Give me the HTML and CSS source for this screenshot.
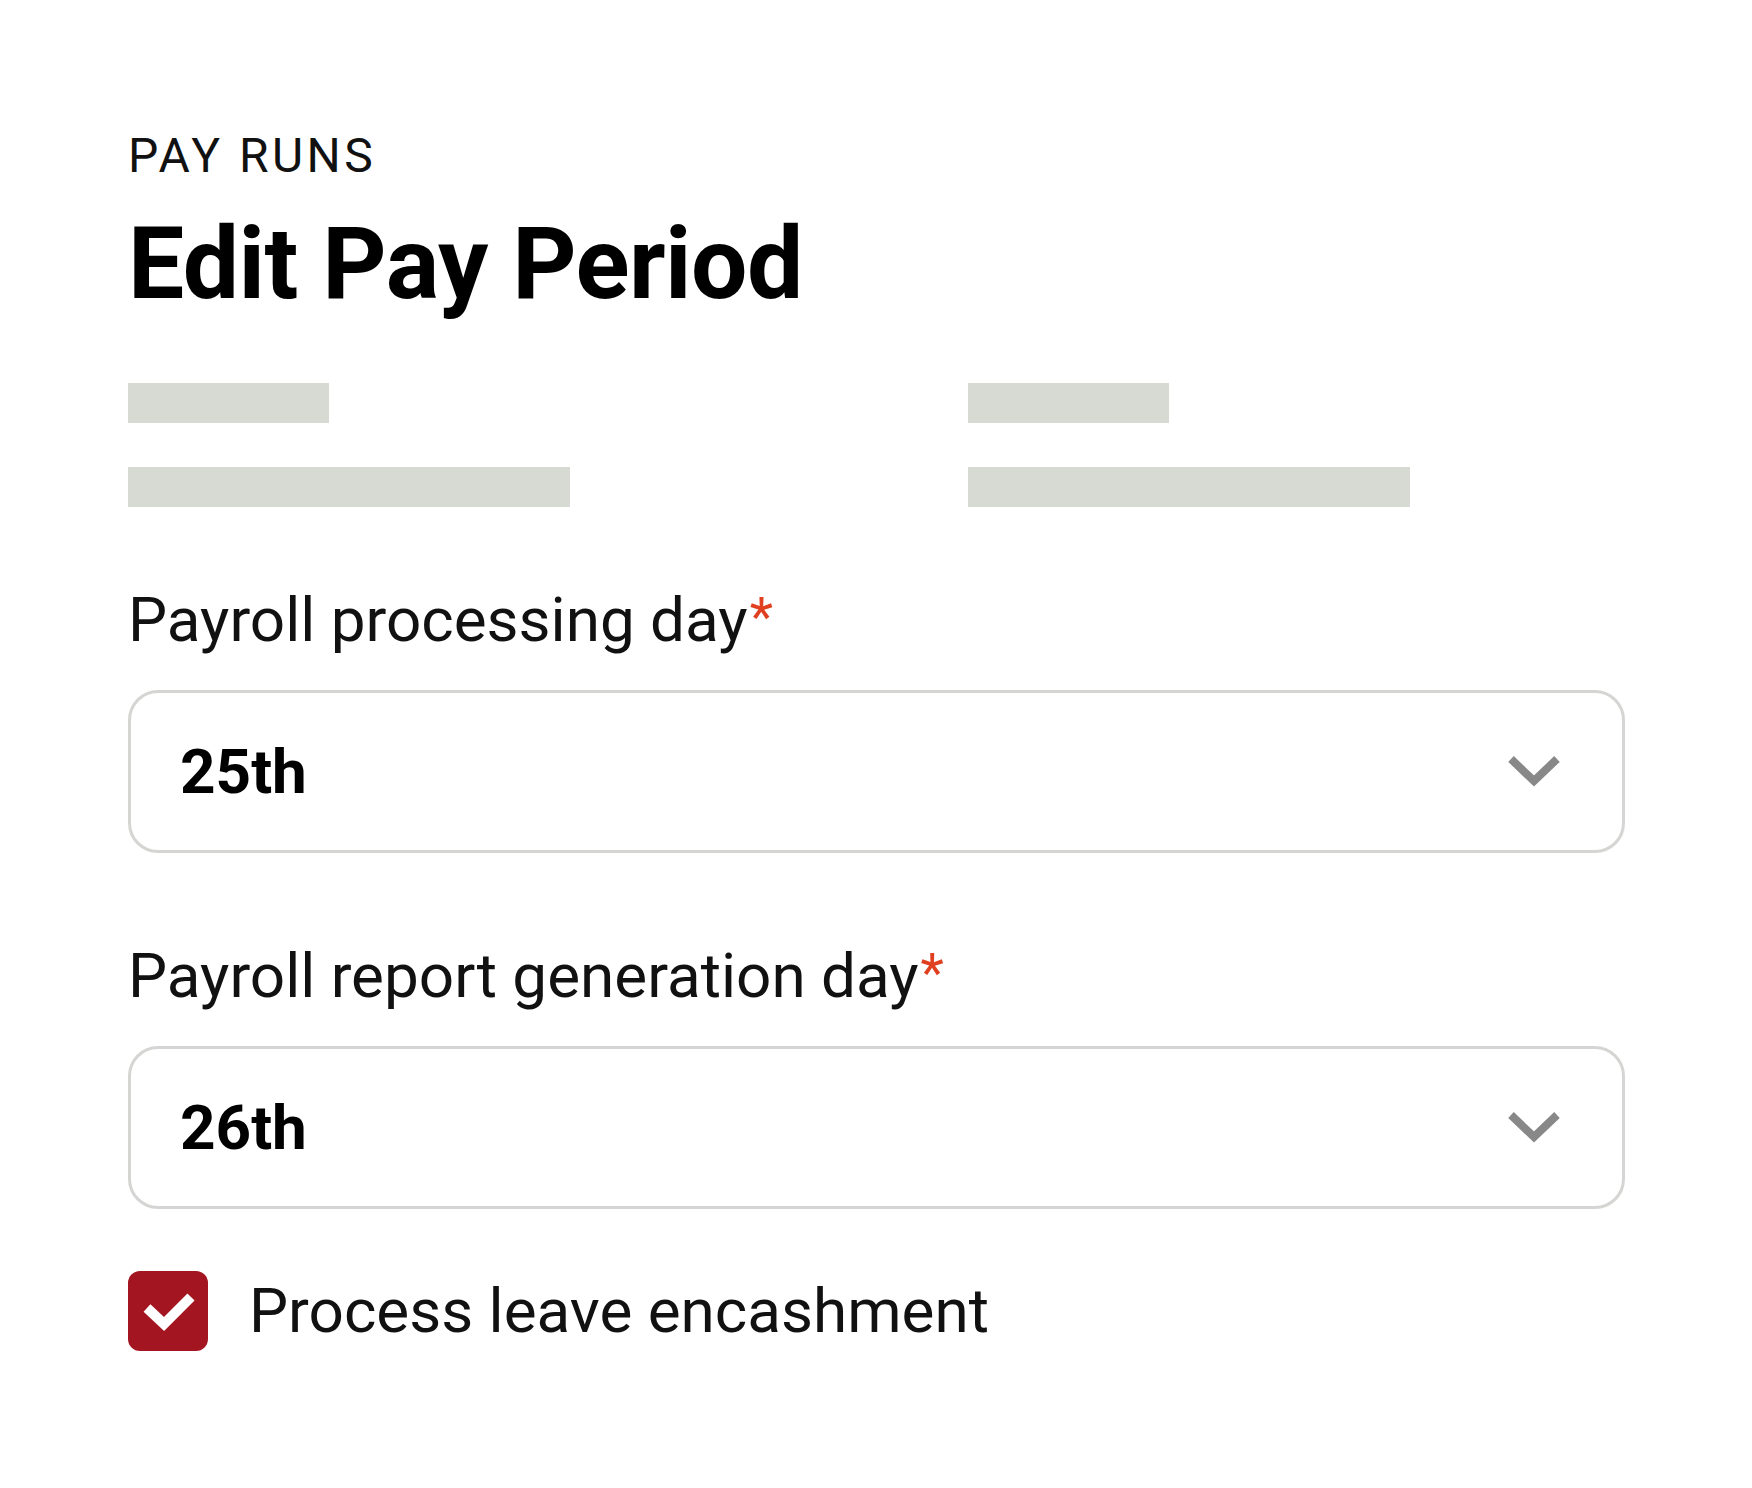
FILE: index.html
```html
<!DOCTYPE html>
<html lang="en">
<head>
<meta charset="utf-8">
<title>Edit Pay Period</title>
<link rel="stylesheet" href="styles.css">
</head>
<body>
<main class="page">
  <div class="eyebrow">PAY RUNS</div>
  <h1 class="title">Edit Pay Period</h1>

  <div class="placeholders">
    <div class="ph-col">
      <div class="ph ph-short"></div>
      <div class="ph ph-long"></div>
    </div>
    <div class="ph-col">
      <div class="ph ph-short"></div>
      <div class="ph ph-long"></div>
    </div>
  </div>

  <div class="field">
    <div class="label">Payroll processing day<span class="req">*</span></div>
    <div class="select">
      <span class="value">25th</span>
      <svg class="chev" width="52" height="32" viewBox="0 0 52 32" aria-hidden="true">
        <polyline points="3,3 26,25 49,3" fill="none" stroke="#888888" stroke-width="8" stroke-linejoin="miter"/>
      </svg>
    </div>
  </div>

  <div class="field field-second">
    <div class="label">Payroll report generation day<span class="req">*</span></div>
    <div class="select">
      <span class="value">26th</span>
      <svg class="chev" width="52" height="32" viewBox="0 0 52 32" aria-hidden="true">
        <polyline points="3,3 26,25 49,3" fill="none" stroke="#888888" stroke-width="8" stroke-linejoin="miter"/>
      </svg>
    </div>
  </div>

  <label class="check-row">
    <span class="checkbox">
      <svg width="80" height="80" viewBox="0 0 80 80" aria-hidden="true">
        <polyline points="19,37 36,53 63,26" fill="none" stroke="#ffffff" stroke-width="10" stroke-linejoin="miter"/>
      </svg>
    </span>
    <span class="check-text">Process leave encashment</span>
  </label>
</main>
</body>
</html>
```

FILE: styles.css
```css
html, body {
  margin: 0;
  padding: 0;
  background: #ffffff;
}

body {
  font-family: Roboto, "Liberation Sans", Arial, sans-serif;
  color: #111111;
}

.page {
  box-sizing: border-box;
  width: 1752px;
  padding: 128px 127px 0 128px;
}

.eyebrow {
  font-size: 48px;
  line-height: 56px;
  font-weight: 400;
  letter-spacing: 3.5px;
  color: #111111;
}

.title {
  margin: 25px 0 0 0;
  font-size: 100px;
  line-height: 110px;
  font-weight: 700;
  color: #000000;
  letter-spacing: -0.5px;
}

.placeholders {
  margin-top: 64px;
  display: grid;
  grid-template-columns: 840px 1fr;
}

.ph-col {
  display: flex;
  flex-direction: column;
  gap: 44px;
}

.ph {
  height: 40px;
  background: #d7dad3;
}

.ph-short {
  width: 201px;
}

.ph-long {
  width: 442px;
}

.field {
  margin-top: 74px;
}

.field-second {
  margin-top: 84px;
}

.label {
  font-size: 62px;
  line-height: 72px;
  font-weight: 400;
  color: #111111;
}

.req {
  color: #e0401f;
  font-size: 54px;
  vertical-align: 6px;
  margin-left: 2px;
}

.select {
  box-sizing: border-box;
  margin-top: 34px;
  height: 163px;
  border: 3px solid #d5d5d3;
  border-radius: 30px;
  display: flex;
  align-items: center;
  justify-content: space-between;
  padding: 0 62px 0 49px;
}

.value {
  font-size: 62px;
  font-weight: 700;
  color: #000000;
  line-height: 72px;
}

.chev {
  display: block;
}

.check-row {
  margin-top: 62px;
  display: flex;
  align-items: center;
  gap: 41px;
}

.checkbox {
  width: 80px;
  height: 80px;
  border-radius: 12px;
  background: #a31521;
  display: flex;
  align-items: center;
  justify-content: center;
  flex: none;
}

.checkbox svg {
  display: block;
}

.check-text {
  font-size: 62px;
  line-height: 72px;
  color: #111111;
}
```
